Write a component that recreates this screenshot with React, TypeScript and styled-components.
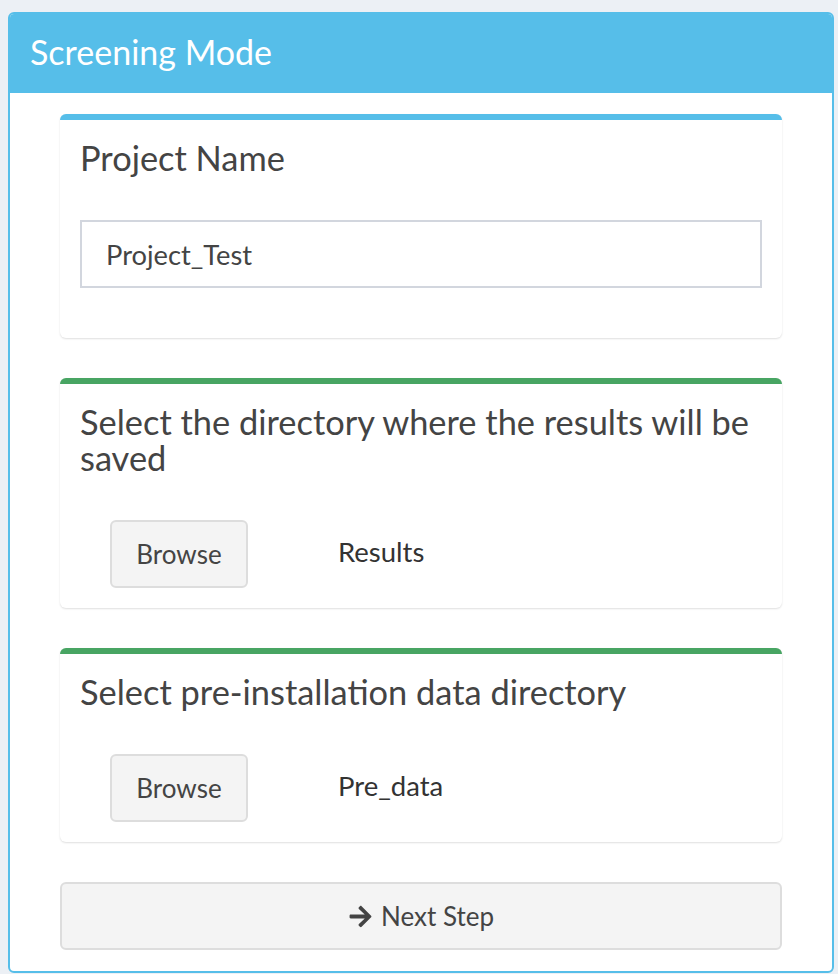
import React from "react";
import styled, { createGlobalStyle } from "styled-components";
import { FaArrowRight } from "react-icons/fa";

const Global = createGlobalStyle`
  html, body { margin: 0; padding: 0; background: #ecf0f5; }
  body { font-family: Lato, "Noto Sans", sans-serif; }
  * { box-sizing: border-box; }
`;

const Page = styled.div`
  padding: 12px 4px 2px 8px;
  width: 838px;
  height: 974px;
`;

const Box = styled.section`
  border: 2px solid #56bee9;
  border-radius: 6px;
  background: #fff;
  overflow: hidden;
`;

const Header = styled.header`
  background: #56bee9;
  padding: 20px 20px 21px;
  height: 79px;
`;

const HeaderTitle = styled.h1`
  margin: 0;
  color: #fff;
  font-size: 34px;
  font-weight: 400;
  line-height: 36px;
`;

const Body = styled.div`
  padding: 21px 50px 21px;
  display: flex;
  flex-direction: column;
  gap: 40px;
`;

const Card = styled.div<{ $accent: string; $padBottom: number }>`
  background: #fff;
  border-top: 6px solid ${(p) => p.$accent};
  border-radius: 6px;
  box-shadow: 0 1px 2px rgba(0, 0, 0, 0.13);
  padding: 20px 20px ${(p) => p.$padBottom}px;
`;

const CardTitle = styled.h3`
  margin: 0 0 44px;
  color: #444;
  font-size: 34.4px;
  font-weight: 400;
  line-height: 36px;
`;

const TextInput = styled.input`
  display: block;
  width: 100%;
  height: 68px;
  border: 2px solid #d2d6de;
  border-radius: 0;
  padding: 0 24px;
  font-family: inherit;
  font-size: 27.3px;
  color: #444;
  outline: none;
`;

const PickerRow = styled.div`
  display: flex;
  align-items: center;
  padding-left: 30px;
`;

const Button = styled.button<{ $block?: boolean }>`
  display: flex;
  align-items: center;
  justify-content: center;
  gap: 8px;
  height: 68px;
  width: ${(p) => (p.$block ? "100%" : "138px")};
  background: #f4f4f4;
  border: 2px solid #ddd;
  border-radius: 6px;
  font-family: inherit;
  font-size: 26px;
  color: #444;
  padding: 0 20px;
  cursor: pointer;
`;

const PathLabel = styled.span`
  margin-left: 90px;
  margin-top: -6px;
  font-size: 27.5px;
  color: #333;
`;

export default function App() {
  return (
    <>
      <Global />
      <Page>
        <Box>
          <Header>
            <HeaderTitle>Screening Mode</HeaderTitle>
          </Header>
          <Body>
            <Card $accent="#56bee9" $padBottom={50}>
              <CardTitle>Project Name</CardTitle>
              <TextInput defaultValue="Project_Test" />
            </Card>
            <Card $accent="#48a563" $padBottom={20}>
              <CardTitle>Select the directory where the results will be saved</CardTitle>
              <PickerRow>
                <Button>Browse</Button>
                <PathLabel>Results</PathLabel>
              </PickerRow>
            </Card>
            <Card $accent="#48a563" $padBottom={20}>
              <CardTitle>Select pre-installation data directory</CardTitle>
              <PickerRow>
                <Button>Browse</Button>
                <PathLabel>Pre_data</PathLabel>
              </PickerRow>
            </Card>
            <Button $block>
              <FaArrowRight size={25} />
              Next Step
            </Button>
          </Body>
        </Box>
      </Page>
    </>
  );
}
